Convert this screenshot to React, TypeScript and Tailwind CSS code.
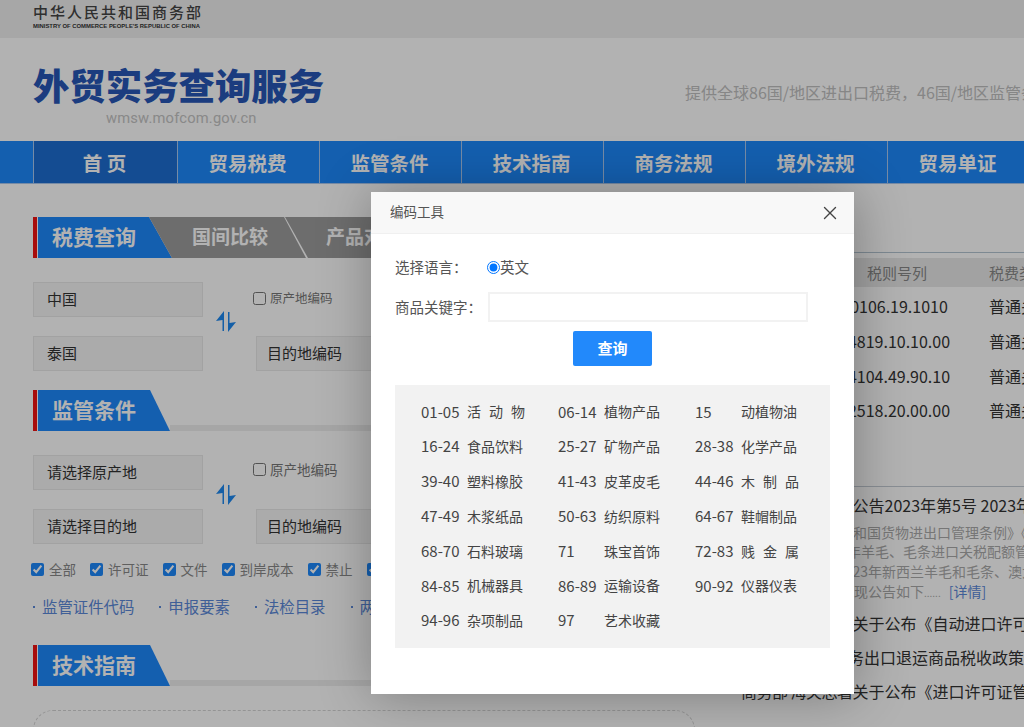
import React from 'react';
import { X } from 'lucide-react';

const NAV = ['首 页', '贸易税费', '监管条件', '技术指南', '商务法规', '境外法规', '贸易单证'];

const CODES: [string, string[]][] = [
    ['01-05', ['活', '动', '物']],
    ['06-14', ['植物产品']],
    ['15', ['动植物油']],
    ['16-24', ['食品饮料']],
    ['25-27', ['矿物产品']],
    ['28-38', ['化学产品']],
    ['39-40', ['塑料橡胶']],
    ['41-43', ['皮革皮毛']],
    ['44-46', ['木', '制', '品']],
    ['47-49', ['木浆纸品']],
    ['50-63', ['纺织原料']],
    ['64-67', ['鞋帽制品']],
    ['68-70', ['石料玻璃']],
    ['71', ['珠宝首饰']],
    ['72-83', ['贱', '金', '属']],
    ['84-85', ['机械器具']],
    ['86-89', ['运输设备']],
    ['90-92', ['仪器仪表']],
    ['94-96', ['杂项制品']],
    ['97', ['艺术收藏']],
];

const TARIFFS = ['0106.19.1010', '4819.10.10.00', '4104.49.90.10', '2518.20.00.00'];
const CHECKS = ['全部', '许可证', '文件', '到岸成本', '禁止'];
const LINKS = ['监管证件代码', '申报要素', '法检目录', '两步申报'];

function SwapIcon() {
    return (
        <svg width="20" height="21" viewBox="0 0 20 21" className="shrink-0 text-[#1e88f0]" fill="currentColor">
            <path d="M8 0 L0 10 L6.5 9 L6.5 20 L8 20 Z" />
            <path d="M12 21 L20 11 L13.5 12 L13.5 1 L12 1 Z" />
        </svg>
    );
}

function Field({ text, className = '' }: { text: string; className?: string }) {
    return (
        <div className={`h-[35px] bg-[#f5f5f5] border border-[#e8e8e8] flex items-center text-[15px] text-[#333] ${className}`}>
            {text}
        </div>
    );
}

function Heading({ title }: { title: string }) {
    return (
        <div className="flex items-end h-[41px]">
            <div className="w-[4px] h-full bg-[#f01313] mr-px" />
            <div className="w-[132px] h-full bg-[#1e88fb] text-white text-[21px] font-bold flex items-center pl-[14px] pb-[2px] [clip-path:polygon(0_0,112px_0,132px_100%,0_100%)]">
                {title}
            </div>
            <div className="flex-1 h-[6px] bg-[#eeeeee]" />
        </div>
    );
}

function FormBlock({ from, to, labelSize }: { from: string; to: string; labelSize: string }) {
    return (
        <div className="flex items-center mt-[24px]">
            <div className="w-[170px] flex flex-col gap-[19px]">
                <Field text={from} className="pl-[13px]" />
                <Field text={to} className="pl-[13px]" />
            </div>
            <div className="w-[53px] flex justify-center pr-[7px] mb-[10px]">
                <SwapIcon />
            </div>
            <div className="flex flex-col flex-1">
                <label className={`h-[35px] flex items-center gap-[4px] text-[#777] -ml-[3px] -mt-[1px] ${labelSize}`}>
                    <input type="checkbox" className="w-[13px] h-[13px] m-0" />
                    原产地编码
                </label>
                <Field text="目的地编码" className="mt-[20px] w-[200px] pl-[10px]" />
            </div>
        </div>
    );
}

function NewsRow({ lead, text, className = '' }: { lead?: string; text: string; className?: string }) {
    return (
        <div className={`h-[34px] flex items-center text-[16px] text-[#333] ${className}`}>
            <span className="w-[2px] h-[2px] bg-[#333] mr-[8px]" />
            {lead && <span className="tracking-[-0.5px] whitespace-pre">{lead}</span>}
            {text}
        </div>
    );
}

export default function App() {
    return (
        <div className="relative w-[1024px] h-[727px] overflow-hidden bg-white font-['Noto_Sans_CJK_SC','Liberation_Sans',sans-serif]">
            {/* Top strip */}
            <div className="h-[38px] bg-[#f0f0f0] pl-[33px] pt-[2px]">
                <div className="text-[15px] leading-[20px] tracking-[2px] text-[#444] font-medium">中华人民共和国商务部</div>
                <div className="text-[5.9px] leading-[8px] font-bold text-[#333] font-['Liberation_Sans',sans-serif] whitespace-nowrap">
                    MINISTRY OF COMMERCE PEOPLE&apos;S REPUBLIC OF CHINA
                </div>
            </div>

            {/* Brand row */}
            <div className="h-[103px] bg-white flex justify-between">
                <div className="pl-[33px] pt-[23px]">
                    <div className="text-[36.4px] leading-[46px] font-black text-[#2756b7] whitespace-nowrap">外贸实务查询服务</div>
                    <div className="pl-[73px] pt-[2px] text-[14.7px] leading-[18px] text-[#c4c4c4] font-['Roboto',sans-serif] tracking-[0.2px]">wmsw.mofcom.gov.cn</div>
                </div>
                <div className="w-[339px] shrink-0 pt-[42px] text-[16px] leading-[24px] text-[#c0c0c0] whitespace-nowrap overflow-hidden">
                    提供全球86国/地区进出口税费，46国/地区监管条件查询
                </div>
            </div>

            {/* Main nav */}
            <nav className="h-[43px] bg-[#1e88fb] border-b border-[#a9c8ee] pl-[33px] flex">
                {NAV.map((item, i) => (
                    <div
                        key={item}
                        className={`shrink-0 border-l border-[#a9c8ee] flex items-center justify-center pt-[2px] pr-[2px] text-white text-[19.5px] font-bold ${
                            i === 0 ? 'bg-[#1d6dd1] w-[144px]' : 'w-[142px]'
                        }`}
                    >
                        {item}
                    </div>
                ))}
            </nav>

            <div className="flex">
                {/* Left column */}
                <div className="w-[722px] shrink-0 pl-[33px] pr-[27px] pt-[33px]">
                    <div className="flex h-[41px]">
                        <div className="w-[4px] h-full bg-[#f01313] mr-px" />
                        <div className="w-[134px] h-full bg-[#1e88fb] text-white text-[21px] font-bold flex items-center pl-[14px] pb-[2px] [clip-path:polygon(0_0,111px_0,134px_100%,0_100%)]">
                            税费查询
                        </div>
                        <div className="w-[157px] -ml-[23px] h-full bg-[#9d9d9d] text-white text-[19px] font-bold flex items-center pl-[43px] pb-[2px] [clip-path:polygon(0_0,135px_0,157px_100%,23px_100%)]">
                            国间比较
                        </div>
                        <div className="flex-1 -ml-[22px] h-full bg-[#9d9d9d] text-white text-[19px] font-bold flex items-center pl-[42px] pb-[2px] [clip-path:polygon(1px_0,100%_0,100%_100%,24px_100%)]">
                            产品对比
                        </div>
                    </div>
                    <FormBlock from="中国" to="泰国" labelSize="text-[12.5px]" />

                    <div className="mt-[19px]">
                        <Heading title="监管条件" />
                    </div>
                    <FormBlock from="请选择原产地" to="请选择目的地" labelSize="text-[13.5px] -translate-y-[2px]" />

                    <div className="flex items-center h-[20px] mt-[15px] -ml-[2px] text-[13.5px] text-[#888]">
                        {CHECKS.map(c => (
                            <label key={c} className="flex items-center gap-[5px] mr-[14px]">
                                <input type="checkbox" defaultChecked className="w-[13px] h-[13px] m-0 accent-[#1e88fb]" />
                                {c}
                            </label>
                        ))}
                        <input type="checkbox" defaultChecked className="w-[13px] h-[13px] m-0 accent-[#1e88fb]" />
                    </div>

                    <div className="flex items-center h-[24px] mt-[16px] text-[15.4px] text-[#5b88d8] whitespace-nowrap">
                        {LINKS.map(l => (
                            <span key={l} className="mr-[25px] flex items-center">
                                <span className="w-[2px] h-[2px] bg-[#5b88d8] mr-[7px]" />
                                {l}
                            </span>
                        ))}
                    </div>

                    <div className="mt-[26px]">
                        <Heading title="技术指南" />
                    </div>
                    <div className="mt-[24px] h-[120px] border border-dashed border-[#d4d4d4] rounded-[20px]" />
                </div>

                {/* Right column */}
                <div className="flex-1 min-w-0 pt-[68px] whitespace-nowrap">
                    <div className="border-t border-[#b4c4d2] pt-[5px]">
                        <div className="flex h-[29px] items-center pt-[2px] bg-[#e8e8e8] text-[15px] text-[#888]">
                            <div className="w-[131px] shrink-0" />
                            <div className="w-[88px] shrink-0 text-center">税则号列</div>
                            <div className="pl-[48px]">税费类别</div>
                        </div>
                        {TARIFFS.map(t => (
                            <div key={t} className="flex h-[34.7px] items-center pt-[4px] text-[16px] text-[#333]">
                                <div className="w-[118px] shrink-0" />
                                <div className="w-[118px] shrink-0 text-center">{t}</div>
                                <div className="pl-[31px]">普通关税</div>
                            </div>
                        ))}
                    </div>

                    <div className="mt-[60px] border-t border-[#c4ccd4]">
                        <NewsRow lead="商务部 海关总署" text="公告2023年第5号 2023年羊毛、毛条" className="h-[36px] pl-[11px]" />
                        <div className="pl-[17px] text-[14px] leading-[19.7px] text-[#aaaaaa]">
                            <div className="pl-[2px]">根据《中华人民共和国货物进出口管理条例》《关税</div>
                            <div>管理办法》，2023年羊毛、毛条进口关税配额管理</div>
                            <div>实施细则，现将2023年新西兰羊毛和毛条、澳大利亚</div>
                            <div className="pl-[3px]">
                                为此，将有关事项现公告如下<span className="text-[10px]">......</span>
                                <span className="ml-[8px] text-[#5b88d8]">[详情]</span>
                            </div>
                        </div>
                        <NewsRow lead="商务部 海关总署" text="关于公布《自动进口许可证管理" className="mt-[3px] pl-[11px]" />
                        <NewsRow text="关于跨境电子商务出口退运商品税收政策的公告" className="pl-[6px]" />
                        <NewsRow lead="商务部 海关总署" text="关于公布《进口许可证管理货物" className="pl-[11px]" />
                    </div>
                </div>
            </div>

            {/* Dimmed backdrop */}
            <div className="absolute inset-0 bg-black/30" />

            {/* Code tool dialog */}
            <div className="absolute left-[371px] top-[192px] w-[483px] h-[502px] bg-white shadow-[1px_1px_50px_rgba(0,0,0,0.3)]">
                <div className="h-[42px] bg-[#f8f8f8] border-b border-[#f0f0f0] flex items-center justify-between pl-[19px] pr-[13px]">
                    <span className="text-[13.5px] text-[#555] -mt-[2px]">编码工具</span>
                    <X size={22} strokeWidth={1.5} className="text-[#444]" />
                </div>
                <div className="px-[24px]">
                    <div className="flex items-center h-[30px] mt-[18px] text-[14.5px] text-[#555]">
                        <span className="w-[92px]">选择语言：</span>
                        <input type="radio" defaultChecked className="w-[13px] h-[13px] m-0" />
                        <span>英文</span>
                    </div>
                    <div className="flex items-center mt-[10px] text-[14.5px] text-[#555]">
                        <span className="w-[93px] whitespace-nowrap">商品关键字：</span>
                        <div className="w-[320px] h-[30px] border-2 border-[#f2f2f2] bg-white" />
                    </div>
                    <div className="flex justify-center mt-[9px]">
                        <button className="w-[79px] h-[35px] bg-[#2289fb] rounded-[2px] text-white text-[15px] font-bold">查询</button>
                    </div>
                    <div className="mt-[19px] h-[263px] bg-[#f2f2f2] pl-[26px] pt-[9.5px] grid grid-cols-[137px_137px_105px] auto-rows-[34.8px] text-[14px] text-[#444]">
                        {CODES.map(([code, name]) => (
                            <div key={code} className="flex items-center justify-between w-[104px]">
                                <span className="text-[15px]">{code}</span>
                                <span className="w-[58px] flex justify-between">
                                    {name.map(n => (
                                        <span key={n}>{n}</span>
                                    ))}
                                </span>
                            </div>
                        ))}
                    </div>
                </div>
            </div>
        </div>
    );
}
